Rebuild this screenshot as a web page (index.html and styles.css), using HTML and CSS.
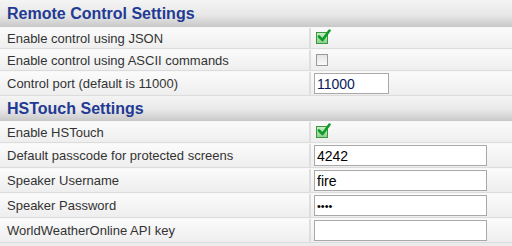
FILE: index.html
```html
<!DOCTYPE html>
<html>
<head>
<meta charset="utf-8">
<link rel="stylesheet" href="styles.css">
</head>
<body>
<div class="settings">
  <div class="section-head first">Remote Control Settings</div>
  <div class="row">
    <div class="label">Enable control using JSON</div>
    <div class="value"><span class="cb checked"><svg viewBox="0 0 14 14" class="tick"><path d="M2 7.5 L5.5 11 L12.5 1.5" /></svg></span></div>
  </div>
  <div class="row">
    <div class="label">Enable control using ASCII commands</div>
    <div class="value"><span class="cb"></span></div>
  </div>
  <div class="row tall">
    <div class="label">Control port (default is 11000)</div>
    <div class="value"><input class="field short" type="text" value="11000"></div>
  </div>
  <div class="section-head">HSTouch Settings</div>
  <div class="row">
    <div class="label">Enable HSTouch</div>
    <div class="value"><span class="cb checked"><svg viewBox="0 0 14 14" class="tick"><path d="M2 7.5 L5.5 11 L12.5 1.5" /></svg></span></div>
  </div>
  <div class="row tall">
    <div class="label">Default passcode for protected screens</div>
    <div class="value"><input class="field" type="text" value="4242"></div>
  </div>
  <div class="row tall">
    <div class="label">Speaker Username</div>
    <div class="value"><input class="field" type="text" value="fire"></div>
  </div>
  <div class="row tall">
    <div class="label">Speaker Password</div>
    <div class="value"><input class="field pw" type="password" value="abcd"></div>
  </div>
  <div class="row tall">
    <div class="label">WorldWeatherOnline API key</div>
    <div class="value"><input class="field" type="text" value=""></div>
  </div>
</div>
</body>
</html>
```
FILE: styles.css
```css
html, body {
  margin: 0;
  padding: 0;
  background: #ececec;
}
.settings {
  width: 512px;
  display: flex;
  flex-direction: column;
  font-family: "Liberation Sans", Arial, sans-serif;
  font-size: 13px;
  color: #333;
}
.section-head {
  height: 25px;
  box-sizing: border-box;
  padding: 3px 0 0 7px;
  font-weight: bold;
  font-size: 16px;
  line-height: 20px;
  color: #233a94;
  background: linear-gradient(#f4f4f4, #e8e8e8 55%, #c8c8c8);
}
.section-head.first {
  height: 27px;
  padding-top: 4px;
}
.row {
  display: grid;
  grid-template-columns: 309px 1fr;
  column-gap: 2px;
  box-sizing: border-box;
  height: 22px;
  border-top: 1px solid #f7f7f7;
  border-bottom: 1px solid #dcdcdc;
  background: #dedede;
}
.row.tall {
  height: 25px;
}
.label, .value {
  background: linear-gradient(#fbfbfb, #eeeeee);
  display: flex;
  align-items: center;
}
.label {
  padding-left: 7px;
}
.value {
  padding-left: 3px;
}
.cb {
  position: relative;
  width: 12px;
  height: 12px;
  margin-left: 2px;
  border: 1px solid #9a9a9a;
  background: linear-gradient(#e4e4e4, #fafafa);
  box-sizing: border-box;
}
.cb.checked {
  border-color: #3a9a3a;
  background: linear-gradient(#c9eac9, #8fd08f);
}
.tick {
  position: absolute;
  left: 0;
  top: -4px;
  width: 14px;
  height: 14px;
  fill: none;
  stroke: #0f9a2a;
  stroke-width: 2.6;
  stroke-linecap: round;
  stroke-linejoin: round;
}
.field {
  box-sizing: border-box;
  width: 173px;
  height: 21px;
  margin: 0;
  padding: 0 2px;
  border: 1px solid #a9a9a9;
  background: #fff;
  font-family: "Liberation Sans", Arial, sans-serif;
  font-size: 14px;
  color: #000;
  outline: none;
}
.field.short {
  width: 75px;
  color: #0a1a5a;
}
.field.pw {
  font-size: 11px;
  letter-spacing: 0;
}
```
